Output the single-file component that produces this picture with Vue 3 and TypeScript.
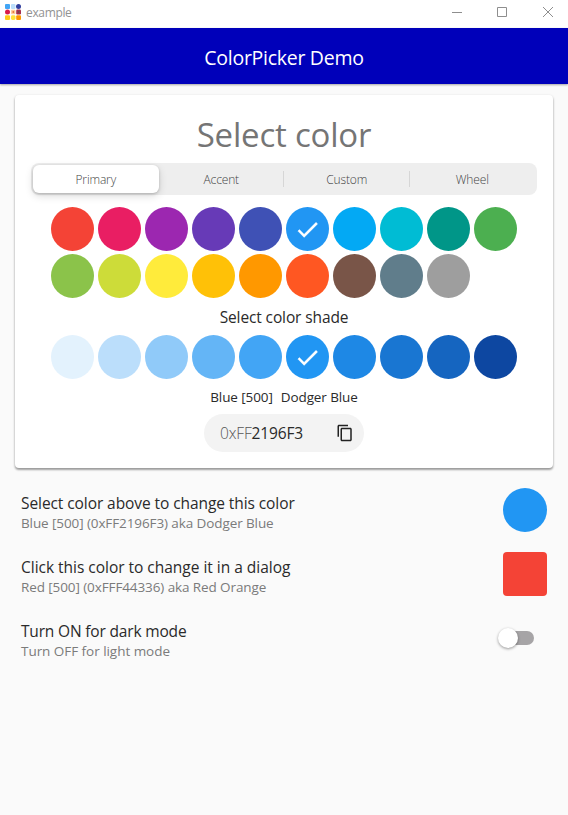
<script setup lang="ts">
import { ref } from 'vue'

const tabs: string[] = ['Primary', 'Accent', 'Custom', 'Wheel']
const activeTab = ref(0)

const primary: string[] = [
  '#f44336', '#e91e63', '#9c27b0', '#673ab7', '#3f51b5', '#2196f3', '#03a9f4', '#00bcd4', '#009688', '#4caf50',
  '#8bc34a', '#cddc39', '#ffeb3b', '#ffc107', '#ff9800', '#ff5722', '#795548', '#607d8b', '#9e9e9e',
]
const shades: string[] = [
  '#e3f2fd', '#bbdefb', '#90caf9', '#64b5f6', '#42a5f5', '#2196f3', '#1e88e5', '#1976d2', '#1565c0', '#0d47a1',
]
const selected = ref(5)
const selectedShade = ref(5)
const dark = ref(false)
</script>

<template>
  <div class="window">
    <header class="titlebar">
      <svg class="logo" width="16" height="16" viewBox="0 0 16 16">
        <rect x="0" y="0" width="5" height="5" rx="1" fill="#42a5f5" />
        <rect x="6" y="0" width="4.5" height="5" rx="1" fill="#bbdefb" />
        <circle cx="13.5" cy="2.5" r="2.5" fill="#303f9f" />
        <circle cx="2.5" cy="8" r="2.5" fill="#d81b4a" />
        <rect x="6" y="5.7" width="4.5" height="4.6" rx="1" fill="#ffcc99" />
        <circle cx="8.3" cy="8" r="0.9" fill="#e0703c" />
        <rect x="11.2" y="5.6" width="4.8" height="4.8" rx="1.2" fill="#a52f50" />
        <circle cx="13.6" cy="8" r="0.8" fill="#4e5a50" />
        <rect x="0" y="11.2" width="5" height="4.8" rx="1" fill="#ffca18" />
        <rect x="6" y="11.2" width="4.5" height="4.8" rx="1.4" fill="#ffe23b" />
        <rect x="11.2" y="11.2" width="4.8" height="4.8" rx="1" fill="#ff9800" />
      </svg>
      <span class="app-name">example</span>
      <div class="controls">
        <svg width="10" height="10" viewBox="0 0 10 10"><path d="M0 5.5h10" /></svg>
        <svg width="10" height="10" viewBox="0 0 10 10"><path d="M.5 .5h9v9h-9z" /></svg>
        <svg width="10" height="10" viewBox="0 0 10 10"><path d="M0 0l10 10M10 0L0 10" /></svg>
      </div>
    </header>
    <div class="appbar"><h1>ColorPicker Demo</h1></div>

    <main>
      <section class="card">
        <h2>Select color</h2>
        <div class="segments">
          <button
            v-for="(tab, i) in tabs"
            :key="tab"
            class="segment"
            :class="{ active: i === activeTab, divided: i > activeTab && i < tabs.length - 1 }"
            @click="activeTab = i"
          >
            <span>{{ tab }}</span>
          </button>
        </div>
        <div class="swatches">
          <button v-for="(c, i) in primary" :key="c" class="swatch" :style="{ background: c }" @click="selected = i">
            <svg v-if="i === selected" viewBox="0 0 24 24"><path d="M9 16.17L4.83 12l-1.42 1.41L9 19 21 7l-1.41-1.41z" /></svg>
          </button>
        </div>
        <h3>Select color shade</h3>
        <div class="swatches">
          <button v-for="(c, i) in shades" :key="c" class="swatch" :style="{ background: c }" @click="selectedShade = i">
            <svg v-if="i === selectedShade" viewBox="0 0 24 24"><path d="M9 16.17L4.83 12l-1.42 1.41L9 19 21 7l-1.41-1.41z" /></svg>
          </button>
        </div>
        <div class="names"><span>Blue [500]</span><span>Dodger Blue</span></div>
        <div class="code">
          <span class="hex"><span class="prefix">0xFF</span>2196F3</span>
          <svg width="18" height="18" viewBox="0 0 24 24">
            <path d="M16 1H4c-1.1 0-2 .9-2 2v14h2V3h12V1zm3 4H8c-1.1 0-2 .9-2 2v14c0 1.1.9 2 2 2h11c1.1 0 2-.9 2-2V7c0-1.1-.9-2-2-2zm0 16H8V7h11v14z" />
          </svg>
        </div>
      </section>

      <ul class="tiles">
        <li>
          <div class="label">
            <p class="title">Select color above to change this color</p>
            <p class="sub">Blue [500] (0xFF2196F3) aka Dodger Blue</p>
          </div>
          <span class="indicator round"></span>
        </li>
        <li>
          <div class="label">
            <p class="title wide">Click this color to change it in a dialog</p>
            <p class="sub">Red [500] (0xFFF44336) aka Red Orange</p>
          </div>
          <span class="indicator square"></span>
        </li>
        <li>
          <div class="label">
            <p class="title tight">Turn ON for dark mode</p>
            <p class="sub loose">Turn OFF for light mode</p>
          </div>
          <button class="switch" :class="{ on: dark }" @click="dark = !dark"><span class="thumb"></span></button>
        </li>
      </ul>
    </main>
  </div>
</template>

<style>
body {
  background: #fafafa;
}
</style>

<style scoped>
.window {
  height: 815px;
  overflow: hidden;
  background: #fafafa;
  color: #2a2a2a;
  font-family: 'Open Sans', 'Noto Sans', sans-serif;
}
h1, h2, h3, p, ul {
  margin: 0;
  padding: 0;
  font-weight: 400;
  white-space: nowrap;
}
button {
  border: 0;
  padding: 0;
  font: inherit;
  color: inherit;
}
.titlebar {
  height: 28px;
  box-sizing: border-box;
  padding: 0 15px 4px 5px;
  display: flex;
  align-items: center;
  background: #fff;
}
.logo {
  flex: none;
}
.app-name {
  margin-left: 5px;
  font-size: 12px;
  line-height: 16px;
  letter-spacing: -0.35px;
  padding-top: 2px;
  color: #929292;
}
.controls {
  margin-left: auto;
  display: flex;
  gap: 35px;
}
.controls svg {
  fill: none;
  stroke: #8e8e8e;
  stroke-width: 1;
}
.controls svg:last-child {
  margin-left: 1px;
}
.appbar {
  height: 56px;
  display: flex;
  align-items: center;
  justify-content: center;
  background: #0000ba;
  color: #fff;
  box-shadow: 0 1px 2px rgba(0, 0, 0, 0.35);
}
.appbar h1 {
  font-size: 19.5px;
  font-weight: 500;
  line-height: 26px;
  letter-spacing: -0.28px;
  padding-top: 4px;
}
main {
  padding: 11px 15px 0;
}
.card {
  height: 373px;
  box-sizing: border-box;
  padding: 17px 16px 0;
  display: flex;
  flex-direction: column;
  align-items: center;
  background: #fff;
  border-radius: 4px;
  box-shadow: 0 2px 2px rgba(0, 0, 0, 0.28), 0 1px 3px rgba(0, 0, 0, 0.2);
}
h2 {
  height: 51px;
  font-size: 33px;
  line-height: 46px;
  letter-spacing: -0.2px;
  color: #757575;
}
.segments {
  width: 506px;
  height: 32px;
  box-sizing: border-box;
  padding: 2px;
  display: grid;
  grid-template-columns: repeat(4, 1fr);
  background: #eee;
  border-radius: 8px;
}
.segment {
  position: relative;
  display: flex;
  align-items: center;
  justify-content: center;
  background: none;
  border-radius: 6px;
  font-size: 12px;
  font-weight: 300;
  line-height: 16px;
  letter-spacing: -0.15px;
  color: #444;
}
.segment span {
  padding-top: 1px;
}
.segment.active {
  background: #fff;
  box-shadow: 0 3px 8px rgba(0, 0, 0, 0.14), 0 1px 3px rgba(0, 0, 0, 0.18);
}
.segment.divided::after {
  content: '';
  position: absolute;
  right: 0;
  top: 6px;
  width: 1px;
  height: 16px;
  background: #d6d6d6;
}
.swatches {
  width: 467px;
  margin-top: 12px;
  margin-right: 1px;
  display: grid;
  grid-template-columns: repeat(10, 44px);
  gap: 3px;
}
.swatch {
  width: 43px;
  height: 44px;
  margin-left: 1px;
  border-radius: 50%;
  display: flex;
  align-items: center;
  justify-content: center;
}
.swatch svg {
  flex: none;
  width: 27px;
  height: 27px;
  fill: #fff;
  stroke: #fff;
  stroke-width: 0.3;
}
h3 {
  height: 26px;
  padding-top: 7px;
  margin-bottom: -8px;
  font-size: 15.5px;
  line-height: 24px;
  letter-spacing: -0.12px;
}
.names {
  display: flex;
  gap: 8px;
  height: 35px;
  box-sizing: border-box;
  padding-top: 9px;
  font-size: 13.5px;
  line-height: 18px;
  letter-spacing: -0.1px;
}
.code {
  width: 160px;
  height: 38px;
  box-sizing: border-box;
  padding: 0 10px 0 16px;
  display: flex;
  align-items: center;
  justify-content: space-between;
  background: #f3f3f3;
  border-radius: 19px;
  font-size: 15.5px;
  letter-spacing: -0.15px;
}
.code svg {
  fill: #222;
}
.prefix {
  color: #555;
  font-weight: 300;
}
.tiles {
  margin-top: 10px;
  list-style: none;
}
.tiles li {
  height: 64px;
  padding: 0 6px;
  display: flex;
  align-items: center;
  justify-content: space-between;
}
.label {
  padding-top: 4px;
}
.title {
  font-size: 15.5px;
  line-height: 22px;
  letter-spacing: -0.08px;
}
.title.wide {
  letter-spacing: -0.02px;
}
.title.tight {
  letter-spacing: -0.17px;
}
.sub {
  font-size: 13.5px;
  line-height: 18px;
  letter-spacing: -0.1px;
  color: #7b7b7b;
}
.sub.loose {
  letter-spacing: -0.04px;
}
.indicator {
  width: 44px;
  height: 44px;
}
.round {
  border-radius: 50%;
  background: #2196f3;
}
.square {
  border-radius: 4px;
  background: #f44336;
}
.switch {
  width: 33px;
  height: 14px;
  margin-right: 13px;
  border-radius: 7px;
  background: #a6a4a6;
  display: flex;
  align-items: center;
}
.thumb {
  flex: none;
  width: 20px;
  height: 20px;
  margin-left: -3px;
  border-radius: 50%;
  background: #fff;
  box-shadow: 0 1px 3px rgba(0, 0, 0, 0.4);
}
.switch.on .thumb {
  margin-left: 16px;
}
</style>
